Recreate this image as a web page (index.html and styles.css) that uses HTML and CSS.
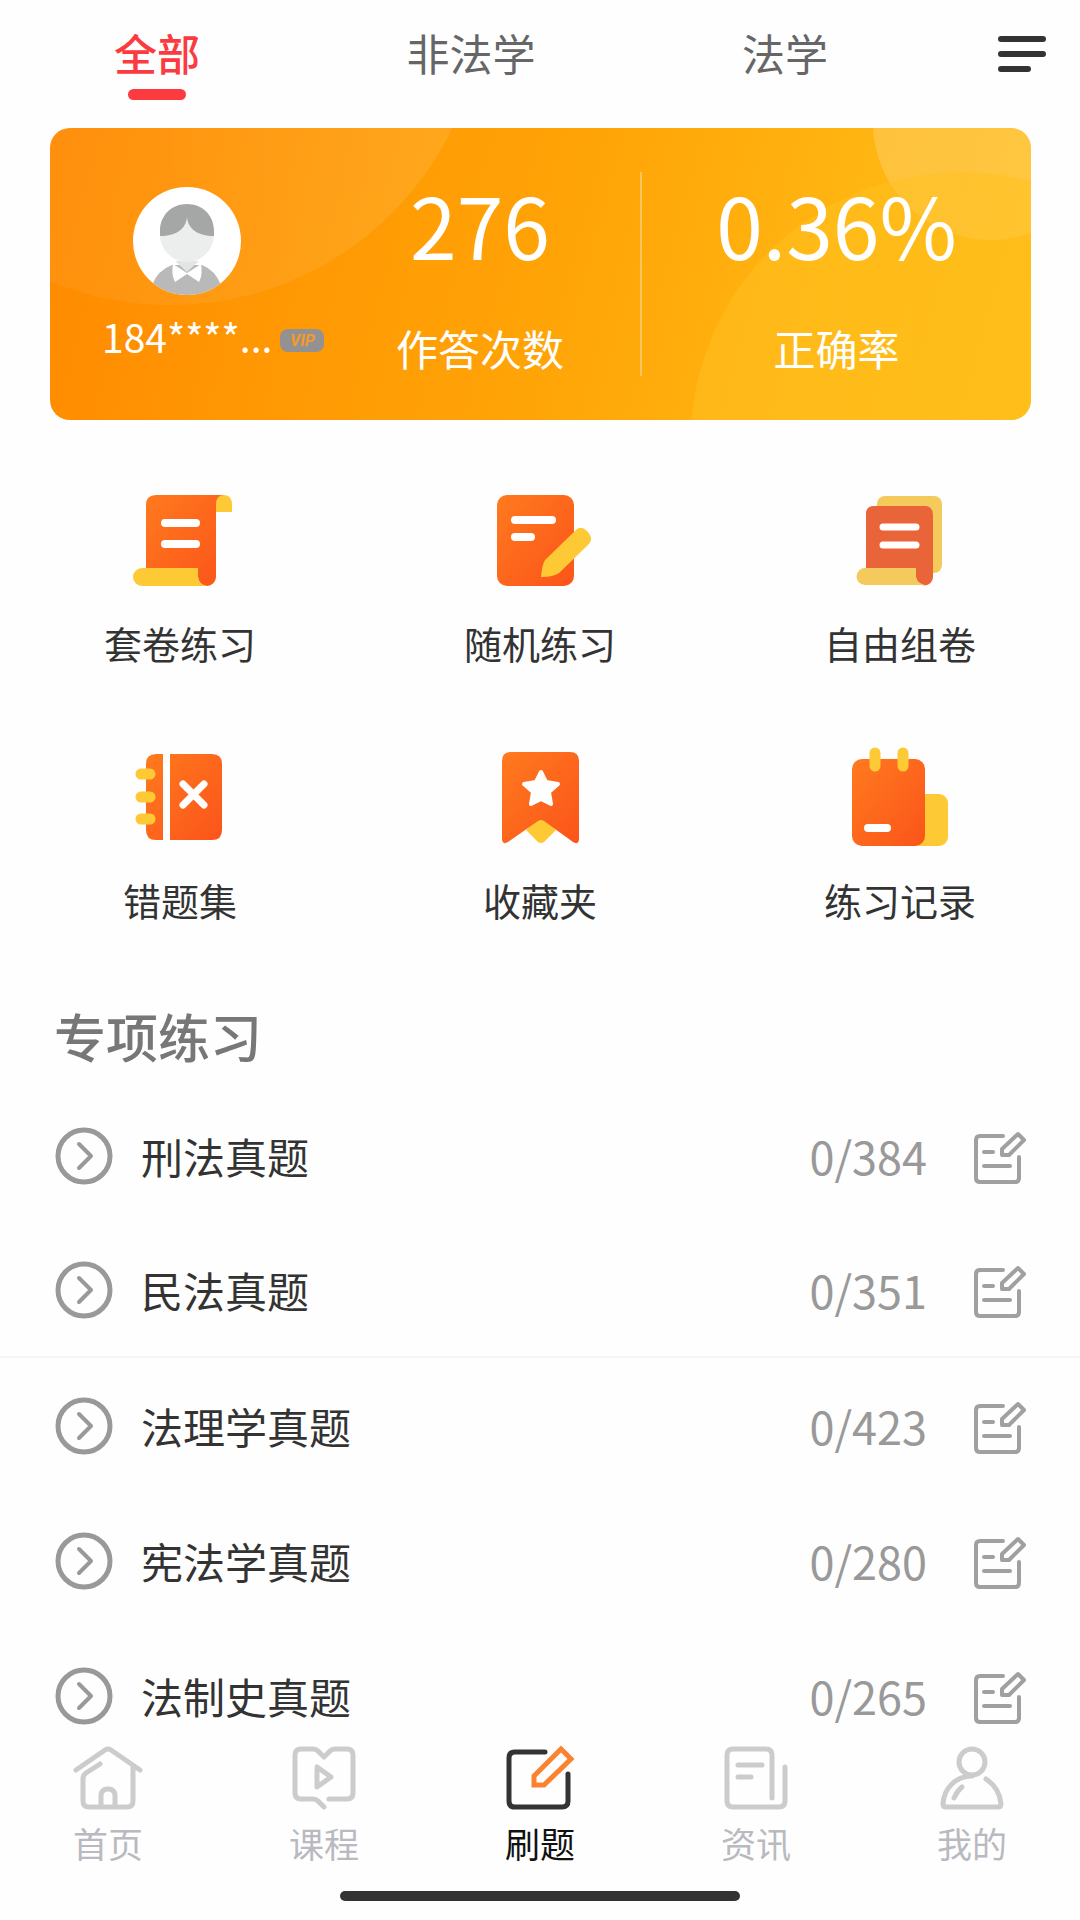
FILE: index.html
```html
<!DOCTYPE html>
<html lang="zh-CN">
<head>
<meta charset="utf-8">
<meta name="viewport" content="width=device-width, initial-scale=1">
<title>刷题</title>
<link rel="stylesheet" href="styles.css">
</head>
<body>
<svg class="defs" aria-hidden="true">
  <defs>
    <linearGradient id="orange" x1="0" y1="0" x2="1" y2="1">
      <stop offset="0" stop-color="#ff7a1e"/>
      <stop offset="1" stop-color="#fb541a"/>
    </linearGradient>
    <symbol id="chevron" viewBox="0 0 58 58">
      <circle cx="29" cy="29" r="26" fill="none" stroke="#999" stroke-width="5"/>
      <path d="M24 17 L36 29 L24 41" fill="none" stroke="#999" stroke-width="4" stroke-linecap="round" stroke-linejoin="round"/>
    </symbol>
    <symbol id="edit" viewBox="0 0 60 60">
      <g fill="none" stroke="#a0a0a0" stroke-width="4" stroke-linecap="round" stroke-linejoin="round">
        <path d="M34 10 H11 Q7 10 7 14 V52 Q7 56 11 56 H46 Q50 56 50 52 V31"/>
        <path d="M49 8 L55 14 L40 29 H33 V23 Z"/>
        <path d="M15 26 H24 M15 40 H41"/>
      </g>
    </symbol>
  </defs>
</svg>
<div class="app">
  <header class="top">
    <nav class="tabs">
      <a class="tab tab-active" href="#all">全部</a>
      <a class="tab" href="#non-law">非法学</a>
      <a class="tab" href="#law">法学</a>
    </nav>
    <button class="menu" type="button" aria-label="菜单">
      <svg width="48" height="36" viewBox="0 0 48 36" stroke="#333" stroke-width="6" stroke-linecap="round"><path d="M3 3 H45 M3 18 H45 M3 33 H30"/></svg>
    </button>
  </header>

  <main class="content">
    <section class="card">
      <svg class="card-art" viewBox="0 0 980 292" preserveAspectRatio="none" aria-hidden="true">
        <defs>
          <linearGradient id="sheen" x1="0" y1="0" x2="1" y2="0"><stop offset="0.4" stop-color="#fff" stop-opacity=".05"/><stop offset="1" stop-color="#fff" stop-opacity=".1"/></linearGradient>
          <linearGradient id="glow" x1="0" y1="0" x2="1" y2="0"><stop offset="0" stop-color="#ffc526" stop-opacity=".4"/><stop offset=".6" stop-color="#ffc01c" stop-opacity=".5"/></linearGradient>
        </defs>
        <circle cx="120" cy="-136" r="313" fill="url(#sheen)"/>
        <circle cx="940" cy="-6" r="118" fill="#fff" fill-opacity=".18"/>
        <circle cx="910" cy="314" r="270" fill="url(#glow)"/>
      </svg>
      <div class="user">
        <svg class="avatar" viewBox="0 0 108 108" role="img" aria-label="头像">
          <defs><clipPath id="face"><circle cx="54" cy="54" r="54"/></clipPath></defs>
          <circle cx="54" cy="54" r="54" fill="#fff"/>
          <g clip-path="url(#face)">
            <path d="M19 98 Q25 83 39 78 H69 Q82 83 88 98 L80 112 H28 Z" fill="#b9b9ba"/>
            <path d="M42 74 H66 L54 85 Z" fill="#e3e4e4"/>
            <path d="M40 77 L54 86 L68 77 Q70 88 66 95 L54 87 L42 95 Q38 88 40 77 Z" fill="#fff"/>
            <path d="M27 48 C27 64 41 75 54 75 C67 75 81 64 81 48 L54 26 Z" fill="#eceeee"/>
            <path d="M27 49 V44 C27 28 39 17 54 17 C69 17 81 28 81 44 V49 C65 49 55 42 54 30 C53 42 43 49 27 49 Z" fill="#a5a7a7"/>
          </g>
        </svg>
        <div class="user-line"><span class="name">184****...</span><span class="vip">VIP</span></div>
      </div>
      <div class="stat stat-divided">
        <strong class="value">276</strong>
        <span class="label">作答次数</span>
      </div>
      <div class="stat">
        <strong class="value">0.36%</strong>
        <span class="label">正确率</span>
      </div>
    </section>

    <section class="tools">
      <a class="tool" href="#papers">
        <svg class="tool-icon" viewBox="0 0 108 108">
          <path d="M90 25 V16 Q90 8 98 8 Q106 8 106 18 V25 Z" fill="#fdc935"/>
          <path d="M30 8 H98 Q90 8 90 18 V90 A9 9 0 0 1 72 90 L72 84 H20 V18 Q20 8 30 8 Z" fill="url(#orange)"/>
          <path d="M16 81 H72 V90 Q72 97 81 99 H16 A9 9 0 0 1 16 81 Z" fill="#fdc935"/>
          <path d="M39 36 H70 M39 57 H70" stroke="#fff" stroke-width="8" stroke-linecap="round"/>
        </svg>
        <span class="tool-name">套卷练习</span>
      </a>
      <a class="tool" href="#random">
        <svg class="tool-icon" viewBox="0 0 108 108">
          <rect x="11" y="8" width="77" height="91" rx="10" fill="url(#orange)"/>
          <path d="M29 33 H66 M29 50 H45" stroke="#fff" stroke-width="8" stroke-linecap="round"/>
          <path d="M55 90 Q56 78 59 73 L90 43 Q95 38 101 44 Q108 51 103 57 L73 86 Q67 90 56 90 Z" fill="#fdc935"/>
        </svg>
        <span class="tool-name">随机练习</span>
      </a>
      <a class="tool" href="#compose">
        <svg class="tool-icon" viewBox="0 0 108 108">
          <rect x="31" y="9" width="65" height="77" rx="8" fill="#f5ca5c"/>
          <path d="M28 19 H80 Q87 20 87 28 V90 A8 8 0 0 1 70 90 V84 H20 V27 Q20 19 28 19 Z" fill="#ea6439"/>
          <path d="M19 81 H70 V90 Q71 96 79 98 H19 A8 8 0 0 1 19 81 Z" fill="#f5ca5c"/>
          <path d="M37 40 H70 M37 58 H70" stroke="#fff" stroke-width="7" stroke-linecap="round"/>
        </svg>
        <span class="tool-name">自由组卷</span>
      </a>
      <a class="tool" href="#mistakes">
        <svg class="tool-icon" viewBox="0 0 108 108">
          <path d="M37 10 H30 Q20 10 20 20 V86 Q20 96 30 96 H37 Z M44 10 H86 Q96 10 96 20 V86 Q96 96 86 96 H44 Z" fill="url(#orange)"/>
          <path d="M15 30 H24 M15 53 H24 M15 75 H24" stroke="#fdc935" stroke-width="11" stroke-linecap="round"/>
          <path d="M57 40 L78 61 M78 40 L57 61" stroke="#fff" stroke-width="7" stroke-linecap="round"/>
        </svg>
        <span class="tool-name">错题集</span>
      </a>
      <a class="tool" href="#favorites">
        <svg class="tool-icon" viewBox="0 0 108 108">
          <path d="M55 72 L70 86 L58 98 Q55 100 52 98 L40 86 Z" fill="#fdc935"/>
          <path d="M25 8 H84 Q93 8 93 17 V96 Q92 101 87 98 L58 77 Q55 75 52 77 L22 98 Q17 101 16 96 V17 Q16 8 25 8 Z" fill="url(#orange)"/>
          <path d="M55 28 L60 38 L72 40 L63 48 L65 60 L55 55 L45 60 L47 48 L38 40 L50 38 Z" fill="#fff" stroke="#fff" stroke-width="4" stroke-linejoin="round"/>
        </svg>
        <span class="tool-name">收藏夹</span>
      </a>
      <a class="tool" href="#history">
        <svg class="tool-icon" viewBox="0 0 108 108">
          <rect x="60" y="50" width="42" height="52" rx="9" fill="#fdc935"/>
          <rect x="6" y="15" width="73" height="87" rx="10" fill="url(#orange)"/>
          <path d="M29 9 V22 M57 9 V22" stroke="#fdc935" stroke-width="11" stroke-linecap="round"/>
          <path d="M22 84 H41" stroke="#fff" stroke-width="8" stroke-linecap="round"/>
        </svg>
        <span class="tool-name">练习记录</span>
      </a>
    </section>

    <section class="topics">
      <h2 class="topics-title">专项练习</h2>
      <ul class="list">
        <li class="row"><svg class="chevron"><use href="#chevron"/></svg><span class="row-name">刑法真题</span><span class="count">0/384</span><button class="edit" type="button" aria-label="练习刑法真题"><svg width="60" height="60"><use href="#edit"/></svg></button></li>
        <li class="row row-line"><svg class="chevron"><use href="#chevron"/></svg><span class="row-name">民法真题</span><span class="count">0/351</span><button class="edit" type="button" aria-label="练习民法真题"><svg width="60" height="60"><use href="#edit"/></svg></button></li>
        <li class="row"><svg class="chevron"><use href="#chevron"/></svg><span class="row-name">法理学真题</span><span class="count">0/423</span><button class="edit" type="button" aria-label="练习法理学真题"><svg width="60" height="60"><use href="#edit"/></svg></button></li>
        <li class="row"><svg class="chevron"><use href="#chevron"/></svg><span class="row-name">宪法学真题</span><span class="count">0/280</span><button class="edit" type="button" aria-label="练习宪法学真题"><svg width="60" height="60"><use href="#edit"/></svg></button></li>
        <li class="row"><svg class="chevron"><use href="#chevron"/></svg><span class="row-name">法制史真题</span><span class="count">0/265</span><button class="edit" type="button" aria-label="练习法制史真题"><svg width="60" height="60"><use href="#edit"/></svg></button></li>
      </ul>
    </section>
  </main>

  <footer class="bottom">
    <nav class="dock">
      <a class="dock-item" href="#home">
        <svg class="dock-icon" viewBox="0 0 72 72"><path d="M4 27 L33 7 Q36 5 39 7 L68 27 M28 21 L14 30 Q11 32 11 36 V58 Q11 64 17 64 H55 Q61 64 61 58 V24 M29 64 V53 Q29 46 36 46 Q43 46 43 53 V64"/></svg>
        <span>首页</span>
      </a>
      <a class="dock-item" href="#course">
        <svg class="dock-icon" viewBox="0 0 72 72"><path d="M36 64 L30 58 Q28 56 25 56 H13 Q7 56 7 50 V12 Q7 6 13 6 H25 Q28 6 30 8 L36 14 L42 8 Q44 6 47 6 H59 Q65 6 65 12 V50 Q65 56 59 56 H41 M29 24 V44 L43 34 Z"/></svg>
        <span>课程</span>
      </a>
      <a class="dock-item dock-active" href="#practice">
        <svg class="dock-icon" viewBox="0 0 72 72"><path d="M41 9 H11 Q5 9 5 15 V58 Q5 64 11 64 H58 Q64 64 64 58 V31"/><path class="pencil" d="M57 6 L67 16 L40 42 H30 V33 Z"/></svg>
        <span>刷题</span>
      </a>
      <a class="dock-item" href="#news">
        <svg class="dock-icon" viewBox="0 0 72 72"><path d="M52 55 V12 Q52 6 46 6 H13 Q7 6 7 12 V58 Q7 64 13 64 H59 Q65 64 65 58 V24 M18 22 H42 M18 34 H31"/></svg>
        <span>资讯</span>
      </a>
      <a class="dock-item" href="#mine">
        <svg class="dock-icon" viewBox="0 0 72 72"><circle cx="36" cy="19" r="13"/><path d="M36 33 C20 33 8 45 7 61 Q7 64 10 64 H62 Q65 64 65 61 C64 50 59 42 50 36 M18 55 Q21 48 26 44"/></svg>
        <span>我的</span>
      </a>
    </nav>
    <div class="home-bar"></div>
  </footer>
</div>
</body>
</html>
```
FILE: styles.css
```css
* {
  box-sizing: border-box;
}

body {
  margin: 0;
  background: #fefefe;
  color: #333;
  font-family: "Noto Sans CJK SC", "Noto Sans", sans-serif;
}

a {
  color: inherit;
  text-decoration: none;
}

button {
  display: flex;
  padding: 0;
  border: 0;
  background: none;
}

.defs {
  position: absolute;
  width: 0;
  height: 0;
}

.app {
  display: flex;
  flex-direction: column;
  height: 100vh;
}

/* Header tabs */
.top {
  display: flex;
  flex: none;
  padding: 22px 34px 28px 0;
}

.tabs {
  display: flex;
  flex: 1;
}

.tab {
  display: flex;
  flex: 1;
  flex-direction: column;
  align-items: center;
  gap: 7px;
  color: #666;
  font-size: 43px;
  line-height: 60px;
}

.tab::after {
  content: "";
  width: 58px;
  height: 11px;
  border-radius: 6px;
}

.tab-active {
  color: #fb3b40;
  font-weight: 500;
}

.tab-active::after {
  background: #fb3b40;
}

.menu {
  justify-content: flex-end;
  width: 104px;
  padding-top: 14px;
}

.menu svg {
  fill: none;
}

/* Scrolling area above the dock */
.content {
  flex: 1;
  min-height: 0;
  overflow-y: auto;
  scrollbar-width: none;
}

.card {
  position: relative;
  display: grid;
  grid-template-columns: minmax(0, 270fr) minmax(0, 322fr) minmax(0, 389fr);
  margin: 0 49px 0 50px;
  padding: 44px 0;
  overflow: hidden;
  border-radius: 20px;
  background: linear-gradient(105deg, #ff8900 0%, #ff9a04 30%, #ffa407 52%, #ffb411 76%, #ffbd18 100%);
  color: #fff;
}

.card-art {
  position: absolute;
  inset: 0;
  width: 100%;
  height: 100%;
}

.user,
.stat {
  position: relative;
}

.user {
  display: flex;
  flex-direction: column;
  gap: 13px;
  padding: 15px 0 0 52px;
}

.avatar {
  width: 108px;
  height: 108px;
  margin-left: 31px;
}

.user-line {
  display: flex;
  align-items: center;
  gap: 8px;
  white-space: nowrap;
}

.name {
  font-size: 39px;
  line-height: 56px;
}

.vip {
  flex: none;
  width: 44px;
  margin-top: 8px;
  border-radius: 8px;
  background: #939191;
  color: #f39a2c;
  font: italic 700 16px/23px Roboto, sans-serif;
  text-align: center;
}

.stat {
  display: flex;
  flex-direction: column;
  align-items: center;
  gap: 42px;
  height: 204px;
}

.stat-divided {
  border-right: 2px solid #ffc65c;
}

.value {
  font-size: 84px;
  font-weight: 400;
  line-height: 104px;
}

.label {
  font-size: 42px;
  line-height: 60px;
}

/* Shortcut grid */
.tools {
  display: grid;
  grid-template-columns: repeat(3, 1fr);
  row-gap: 73px;
  padding: 67px 0 0;
}

.tool {
  display: flex;
  flex-direction: column;
  align-items: center;
  gap: 20px;
}

.tool-icon {
  width: 108px;
  height: 108px;
  fill: none;
}

.tool-name {
  font-size: 38px;
  line-height: 56px;
}

.dock-item span,
.tool-name,
.row-name {
  white-space: nowrap;
}

/* Topic list */
.topics {
  padding-top: 70px;
}

.topics-title {
  margin: 0 54px;
  color: #777;
  font-size: 52px;
  font-weight: 500;
  line-height: 76px;
}

.list {
  margin: 0;
  padding: 14px 0 0;
  list-style: none;
}

.row {
  display: flex;
  align-items: center;
  height: 135px;
  padding: 0 51px 0 55px;
}

.row-line {
  border-bottom: 2px solid #f5f5f5;
}

.chevron {
  width: 58px;
  height: 58px;
}

.row-name {
  flex: 1;
  margin-left: 28px;
  font-size: 42px;
  line-height: 60px;
}

.count {
  margin-right: 42px;
  color: #999;
  font-size: 45px;
  line-height: 60px;
}

/* Bottom dock */
.bottom {
  flex: none;
  padding: 8px 0 19px;
  background: #fefefe;
}

.dock {
  display: grid;
  grid-template-columns: repeat(5, 1fr);
}

.dock-item {
  display: flex;
  flex-direction: column;
  align-items: center;
  gap: 2px;
  color: #b9b9c0;
  font-size: 35px;
  line-height: 52px;
}

.dock-icon {
  width: 72px;
  height: 72px;
  fill: none;
  stroke: #ccc;
  stroke-width: 5;
  stroke-linecap: round;
  stroke-linejoin: round;
}

.dock-active {
  color: #111;
}

.dock-active .dock-icon {
  stroke: #333;
}

.dock-active .pencil {
  stroke: #fb8330;
  stroke-linejoin: miter;
}

.home-bar {
  width: 37%;
  height: 10px;
  margin: 22px auto 0;
  border-radius: 5px;
  background: #333;
}
```
